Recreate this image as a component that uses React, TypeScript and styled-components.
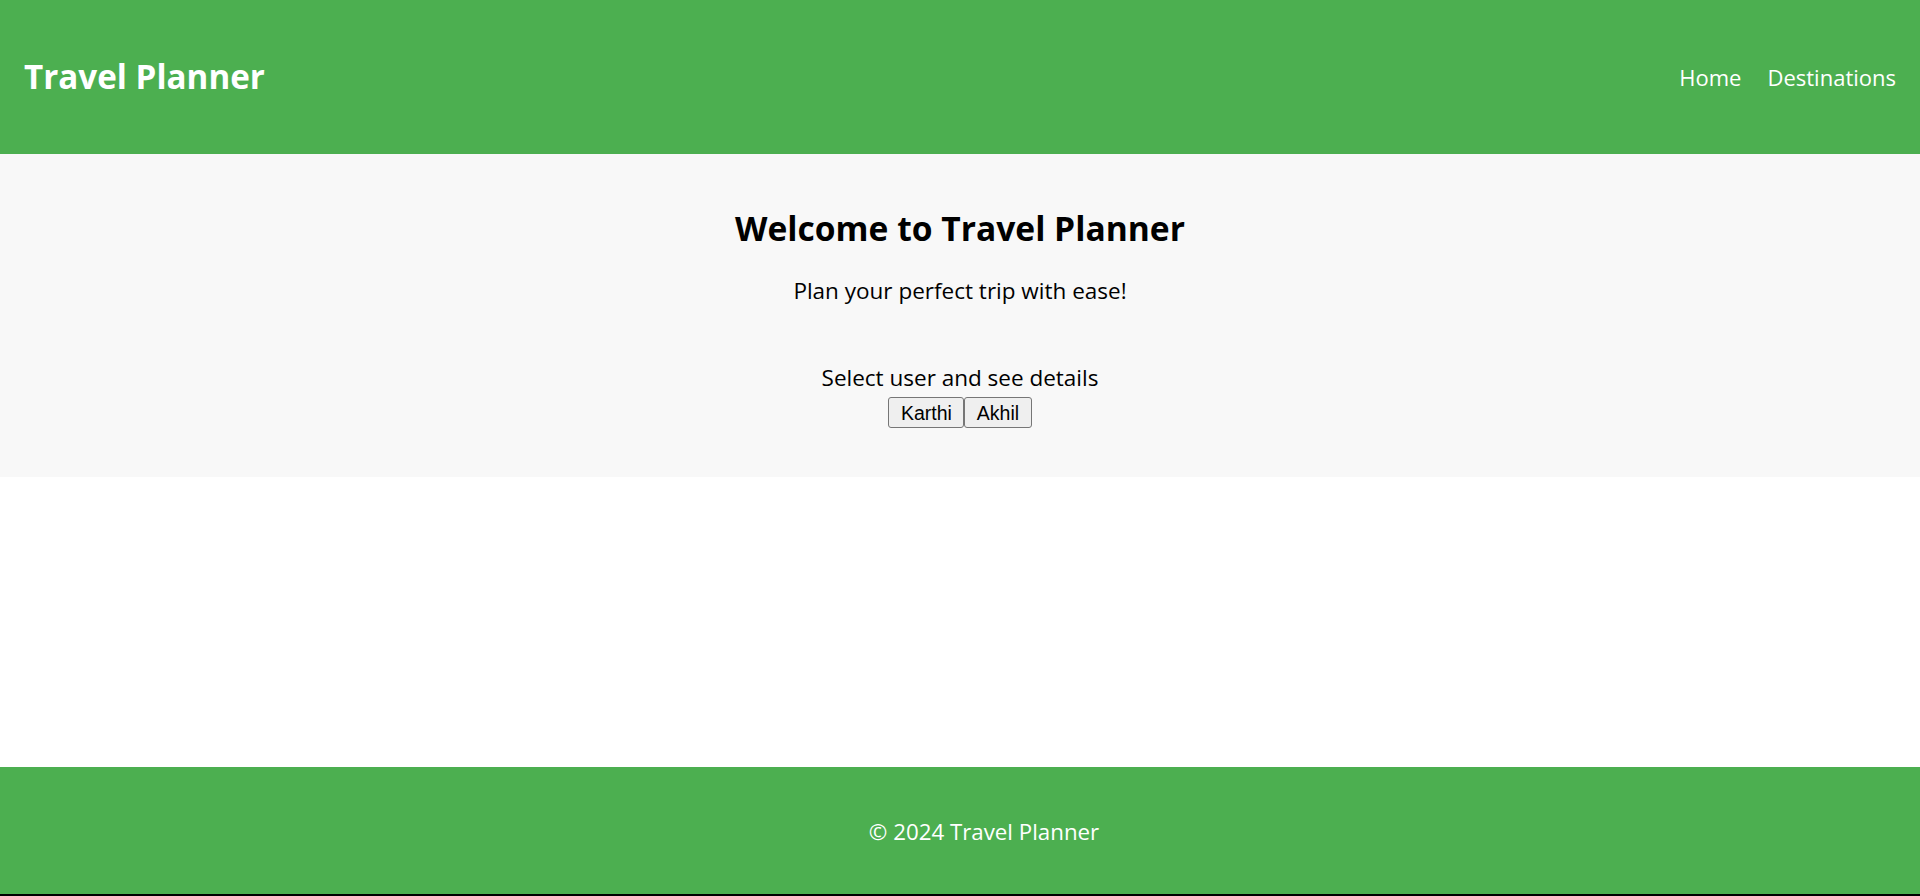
import React from "react";
import styled, { createGlobalStyle } from "styled-components";

const GlobalStyle = createGlobalStyle`
  html, body {
    margin: 0;
    padding: 0;
  }
  body {
    font-family: "Open Sans", "Noto Sans", Arial, sans-serif;
    color: #000;
    background: #fff;
  }
  * { box-sizing: border-box; }
`;

const Page = styled.div`
  min-height: 100vh;
  display: flex;
  flex-direction: column;
`;

const Header = styled.header`
  height: 154px;
  background: #4caf50;
  color: #fff;
  display: flex;
  align-items: center;
  justify-content: space-between;
  padding: 0 24px 0 24px;
`;

const Logo = styled.h1`
  margin: 0;
  font-size: 33.2px;
  font-weight: 700;
  line-height: 40px;
`;

const Nav = styled.nav`
  display: flex;
  align-items: center;
  gap: 26px;
`;

const NavLink = styled.a`
  color: #fff;
  text-decoration: none;
  font-size: 22px;
  line-height: 30px;
  cursor: pointer;
`;

const Main = styled.main`
  flex: 1;
  display: flex;
  flex-direction: column;
`;

const Hero = styled.section`
  background: #f8f8f8;
  text-align: center;
  padding: 54px 20px 49px;
`;

const Title = styled.h2`
  margin: 0;
  font-size: 33.6px;
  font-weight: 700;
  line-height: 40px;
`;

const Tagline = styled.p`
  margin: 28px 0 0;
  font-size: 22.5px;
  line-height: 30px;
`;

const SelectBlock = styled.div`
  margin-top: 57px;
  display: flex;
  flex-direction: column;
  align-items: center;
`;

const SelectLabel = styled.div`
  font-size: 22.5px;
  line-height: 30px;
`;

const ButtonRow = styled.div`
  display: flex;
  margin-top: 4px;
`;

const UserButton = styled.button`
  font-family: "Liberation Sans", Arial, sans-serif;
  font-size: 19.5px;
  line-height: 22px;
  color: #000;
  background: #efefef;
  border: 1px solid #767676;
  border-radius: 3px;
  padding: 3.5px 11.5px;
  margin: 0;
  cursor: pointer;
`;

const Footer = styled.footer`
  height: 129px;
  background: #4caf50;
  color: #fff;
  border-bottom: 2px solid #000;
  display: flex;
  align-items: center;
  justify-content: center;
  padding: 3px 0 0 48px;
`;

const FooterText = styled.p`
  margin: 0;
  font-size: 22.3px;
  line-height: 30px;
`;

export default function App() {
  return (
    <>
      <GlobalStyle />
      <Page>
        <Header>
          <Logo>Travel Planner</Logo>
          <Nav>
            <NavLink>Home</NavLink>
            <NavLink>Destinations</NavLink>
          </Nav>
        </Header>
        <Main>
          <Hero>
            <Title>Welcome to Travel Planner</Title>
            <Tagline>Plan your perfect trip with ease!</Tagline>
            <SelectBlock>
              <SelectLabel>Select user and see details</SelectLabel>
              <ButtonRow>
                <UserButton>Karthi</UserButton>
                <UserButton>Akhil</UserButton>
              </ButtonRow>
            </SelectBlock>
          </Hero>
        </Main>
        <Footer>
          <FooterText>© 2024 Travel Planner</FooterText>
        </Footer>
      </Page>
    </>
  );
}
